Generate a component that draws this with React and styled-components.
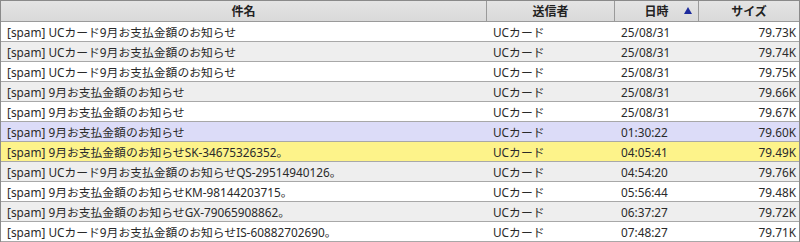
import React from "react";
import styled, { createGlobalStyle } from "styled-components";

const Global = createGlobalStyle`
  html, body { margin: 0; padding: 0; background: #ffffff; }
  body { font-family: "Noto Sans", "Noto Sans CJK JP", sans-serif; }
`;

const cols = "486px 128px 84px 100px";

const Table = styled.div`
  width: 800px;
  height: 242px;
  box-sizing: border-box;
  border: 1px solid #8a8a8a;
  border-bottom: none;
  overflow: hidden;
  color: #2a2a2a;
  font-size: 11.8px;
`;

const HeaderRow = styled.div`
  display: grid;
  grid-template-columns: ${cols};
  height: 21px;
  box-sizing: border-box;
  border-bottom: 1px solid #9a9a9a;
  background: linear-gradient(#e4e4e4, #d9d9d9);
`;

const HeaderCell = styled.div`
  display: flex;
  align-items: center;
  justify-content: center;
  position: relative;
  font-weight: bold;
  font-size: 12px;
  color: #222;
  box-sizing: border-box;
  border-right: ${(p) => (p.$last ? "none" : "1px solid #9a9a9a")};
`;

const SortMark = styled.span`
  position: absolute;
  right: 6px;
  top: 6px;
  width: 0;
  height: 0;
  border-left: 4px solid transparent;
  border-right: 4px solid transparent;
  border-bottom: 7px solid #1c2a9c;
`;

const Row = styled.div`
  display: grid;
  grid-template-columns: ${cols};
  height: 20px;
  box-sizing: border-box;
  border-bottom: 1px solid #a8a8a8;
  background: ${(p) => p.$bg};
`;

const Cell = styled.div`
  display: flex;
  align-items: center;
  white-space: nowrap;
  overflow: hidden;
  padding: 0 ${(p) => (p.$right ? "3px" : "0")} 0 ${(p) => (p.$right ? "0" : "6px")};
  justify-content: ${(p) => (p.$right ? "flex-end" : "flex-start")};
`;

const rows = [
  ["[spam] UCカード9月お支払金額のお知らせ", "25/08/31", "79.73K", "#ffffff"],
  ["[spam] UCカード9月お支払金額のお知らせ", "25/08/31", "79.74K", "#eeeeee"],
  ["[spam] UCカード9月お支払金額のお知らせ", "25/08/31", "79.75K", "#ffffff"],
  ["[spam] 9月お支払金額のお知らせ", "25/08/31", "79.66K", "#eeeeee"],
  ["[spam] 9月お支払金額のお知らせ", "25/08/31", "79.67K", "#ffffff"],
  ["[spam] 9月お支払金額のお知らせ", "01:30:22", "79.60K", "#dcdcf8"],
  ["[spam] 9月お支払金額のお知らせSK-34675326352。", "04:05:41", "79.49K", "#fdf38a"],
  ["[spam] UCカード9月お支払金額のお知らせQS-29514940126。", "04:54:20", "79.76K", "#eeeeee"],
  ["[spam] 9月お支払金額のお知らせKM-98144203715。", "05:56:44", "79.48K", "#ffffff"],
  ["[spam] 9月お支払金額のお知らせGX-79065908862。", "06:37:27", "79.72K", "#eeeeee"],
  ["[spam] UCカード9月お支払金額のお知らせIS-60882702690。", "07:48:27", "79.71K", "#ffffff"],
];

export default function App() {
  return (
    <>
      <Global />
      <Table>
        <HeaderRow>
          <HeaderCell>件名</HeaderCell>
          <HeaderCell>送信者</HeaderCell>
          <HeaderCell>
            日時
            <SortMark />
          </HeaderCell>
          <HeaderCell $last>サイズ</HeaderCell>
        </HeaderRow>
        {rows.map(([subject, date, size, bg], i) => (
          <Row key={i} $bg={bg}>
            <Cell>{subject}</Cell>
            <Cell>UCカード</Cell>
            <Cell>{date}</Cell>
            <Cell $right>{size}</Cell>
          </Row>
        ))}
      </Table>
    </>
  );
}
